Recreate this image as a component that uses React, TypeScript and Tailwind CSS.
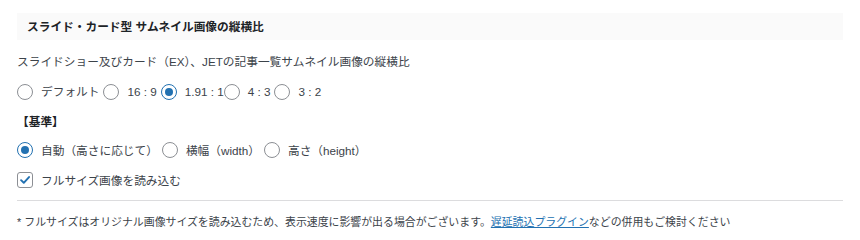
import React from 'react'

const font = { fontFamily: '"Liberation Sans", "Noto Sans CJK JP", sans-serif' }

function Radio({ checked }: { checked?: boolean }): React.ReactElement {
  return (
    <span
      className={`inline-flex items-center justify-center w-4 h-4 rounded-full border bg-white shrink-0 ${
        checked ? 'border-[#2271b1]' : 'border-[#8c8f94]'
      }`}
    >
      {checked && <span className="w-2 h-2 rounded-full bg-[#2271b1]" />}
    </span>
  )
}

function Option({ label, checked, gap = 'mr-[4px]' }: { label: string; checked?: boolean; gap?: string }): React.ReactElement {
  return (
    <label className={`flex items-center ${gap}`}>
      <Radio checked={checked} />
      <span className="ml-[8px]">{label}</span>
    </label>
  )
}

export default function App(): React.ReactElement {
  return (
    <div className="w-[860px] h-[240px] overflow-hidden bg-white text-[#3c434a] px-[17px]" style={font}>
      {/* section header */}
      <div className="mt-[13px] h-[27px] bg-[#fafafa] flex items-center pl-[10px]">
        <h3 className="text-[11.7px] font-bold text-[#1d2327]">スライド・カード型 サムネイル画像の縦横比</h3>
      </div>

      <p className="text-[11.7px] leading-none mt-[16px]">
        スライドショー及びカード（EX）、JETの記事一覧サムネイル画像の縦横比
      </p>

      <div className="flex items-center text-[11.7px] leading-none mt-[16px]">
        <Option label="デフォルト" />
        <Option label="16 : 9" />
        <Option label="1.91 : 1" checked gap="mr-0" />
        <Option label="4 : 3" />
        <Option label="3 : 2" />
      </div>

      <div className="text-[11.7px] font-bold leading-none mt-[16px] text-[#1d2327]">【基準】</div>

      <div className="flex items-center text-[11.7px] leading-none mt-[15px]">
        <Option label="自動（高さに応じて）" checked />
        <Option label="横幅（width）" />
        <Option label="高さ（height）" />
      </div>

      <label className="flex items-center text-[11.7px] leading-none mt-[14px]">
        <span className="w-4 h-4 rounded-[3px] border border-[#8c8f94] bg-white flex items-center justify-center">
          <svg viewBox="0 0 16 16" className="w-[14px] h-[14px]">
            <path d="M3.5 8.2 L6.6 11.2 L12.6 4.6" fill="none" stroke="#2271b1" strokeWidth="2.2" strokeLinecap="round" strokeLinejoin="round" />
          </svg>
        </span>
        <span className="ml-[8px]">フルサイズ画像を読み込む</span>
      </label>

      <hr className="mt-[12px] border-0 border-t border-[#dcdcde]" />

      <p className="text-[10.9px] leading-none mt-[16px]">
        * フルサイズはオリジナル画像サイズを読み込むため、表示速度に影響が出る場合がございます。
        <a className="text-[#2271b1] underline">遅延読込プラグイン</a>
        などの併用もご検討ください
      </p>
    </div>
  )
}
